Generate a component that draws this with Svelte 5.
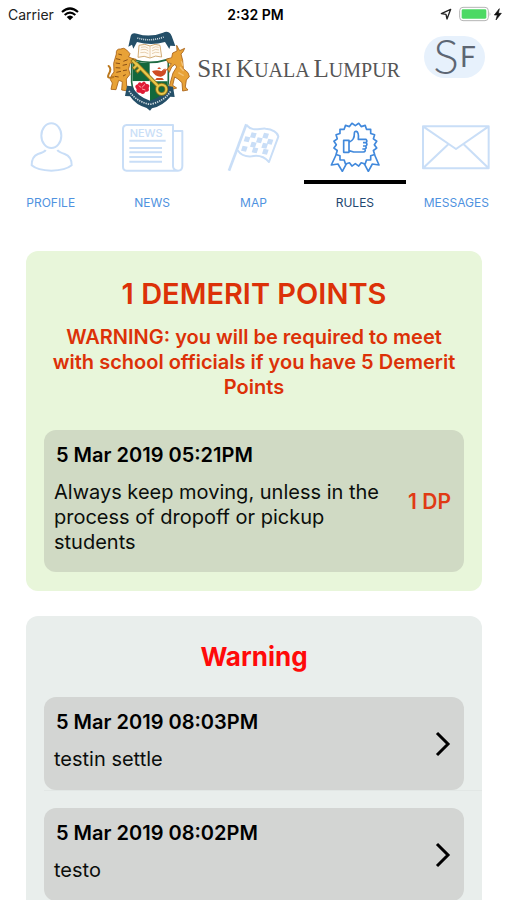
<script>
  const seal = Array.from({ length: 40 }, (_, i) => {
    const a = (i * Math.PI) / 20 - Math.PI / 2 + Math.PI / 20;
    const r = i % 2 ? 57 : 65;
    return `${(436 + r * Math.cos(a)).toFixed(1)},${(89 + r * Math.sin(a)).toFixed(1)}`;
  }).join(' ');

  const checks = [
    [131, 61], [168, 62], [112, 73], [149, 76], [181, 80],
    [131, 89], [165, 92], [104, 101], [136, 106], [167, 110]
  ];

  const tabs = [
    { id: 'profile', label: 'PROFILE', x: 47 },
    { id: 'news', label: 'NEWS', x: 351 },
    { id: 'map', label: 'MAP', x: 25 },
    { id: 'rules', label: 'RULES', x: 330 },
    { id: 'messages', label: 'MESSAGES', x: 634 }
  ];

  const warnings = [
    { date: '5 Mar 2019 08:03PM', text: 'testin settle' },
    { date: '5 Mar 2019 08:02PM', text: 'testo' }
  ];

  let active = $state('rules');
</script>

<div class="app">
  <div class="status">
    <div class="carrier">
      <span>Carrier</span>
      <svg width="18" height="14" viewBox="0 0 54 42" aria-hidden="true">
        <g fill="none" stroke="#000" stroke-width="6.5">
          <path d="M3 15Q27 -6 51 15" />
          <path d="M11 24Q27 10 43 24" />
        </g>
        <path d="M27 40L17 30Q27 21 37 30Z" />
      </svg>
    </div>
    <time>2:32 PM</time>
    <div class="power">
      <svg width="12" height="12" viewBox="0 0 36 36" aria-hidden="true">
        <path d="M4 17L32 4L21 33L18 19Z" fill="none" stroke="#222" stroke-width="4" stroke-linejoin="round" />
      </svg>
      <svg width="44" height="16" viewBox="0 0 132 48" aria-hidden="true">
        <rect x="2" y="4" width="86" height="40" rx="10" fill="#fff" stroke="#b5b5b5" stroke-width="3" />
        <rect x="8" y="10" width="74" height="28" rx="4" fill="#4cd964" />
        <path d="M92 18Q97 24 92 31Z" fill="#aaa" />
        <path d="M121 8L106 27H115L111 42L127 22H118Z" fill="#111" stroke="#111" stroke-width="2" />
      </svg>
    </div>
  </div>

  <header>
    <div class="brand">
      <svg class="crest" width="84" height="84" viewBox="22 10 252 252" aria-hidden="true">
        <path d="M96 98Q150 116 206 98V166Q202 220 151 240Q100 218 96 166Z" fill="#fff" stroke="#1f6b43" stroke-width="5" />
        <path d="M99 102Q125 109 150 109V164H99Z" fill="#12683c" />
        <path d="M151 164H204Q202 215 151 236Z" fill="#12683c" />
        <path d="M92 33Q94 16 112 21Q150 34 190 18Q208 10 216 28L227 58L212 57L209 67L196 46Q155 58 112 46L101 66L97 54L86 60Z" fill="#244f68" />
        <path d="M113 34Q152 46 192 31" fill="none" stroke="#d3dde1" stroke-width="5" stroke-dasharray="3 3" />
        <path d="M118 56Q137 49 151 58Q166 49 181 56L186 91Q167 84 151 94Q134 85 115 92Z" fill="#fffaf1" stroke="#c99c5d" stroke-width="2.5" />
        <path d="M151 58V93M124 62Q138 57 146 65M123 70Q138 65 146 73M122 78Q137 74 146 81M157 65Q167 57 177 62M157 73Q167 65 178 70M157 81Q167 74 179 78" fill="none" stroke="#ddb98d" stroke-width="2" />
        <g fill="#e8a237" stroke="#a76016" stroke-width="2.5" stroke-linejoin="round">
          <path d="M50 82Q48 66 63 67Q73 61 81 70L91 81L87 91L97 95L109 98L107 108L91 109L87 127L91 143L80 157L81 179L91 186L85 193L66 190L68 165L57 161L49 189L34 188L38 169L32 159Q35 142 43 136L42 110Z" />
          <path d="M216 93L219 79L232 73L231 56Q238 69 240 72L255 65Q251 77 244 82L249 101L251 126L265 138L269 150L260 160L257 181L265 190L249 193L247 168L235 157L225 151L219 176L231 184L211 190L210 175L220 139L231 121L226 113L216 121L209 137L203 127L215 111L205 108L199 98Z" />
        </g>
        <path d="M41 151Q20 158 27 143Q37 127 27 118" fill="none" stroke="#bc791f" stroke-width="6" stroke-linecap="round" />
        <path d="M56 82L67 85M49 96L62 99M48 109L61 111M48 123L62 124M50 137L64 134M45 149L57 151M71 104L84 99M69 116L82 113M70 132L82 130M70 148L78 144" stroke="#8a4f16" stroke-width="3" />
        <path d="M245 104L250 118M241 121L252 133M236 138L252 147" stroke="#f3c274" stroke-width="4" />
        <path d="M82 177L97 179Q114 211 151 222Q190 211 205 178L220 180L225 211L212 210Q190 237 157 245L151 252L141 244Q108 235 91 209L76 208Z" fill="#244f68" />
        <path d="M88 193Q111 226 151 233Q192 225 213 194" fill="none" stroke="#d3dde1" stroke-width="5" stroke-dasharray="4 3" />
        <path d="M157 133Q166 151 184 150Q199 147 200 130Q190 129 185 134Q174 128 157 133ZM173 127Q178 117 184 127ZM171 154H188L193 160H166Z" fill="#cf4c24" />
        <path d="M185 137Q193 123 202 130" fill="none" stroke="#cf4c24" stroke-width="3" />
        <path d="M99 164H149V217Q104 205 99 164Z" fill="#fff" />
        <path d="M126 170Q134 159 139 171Q154 172 147 184Q151 197 137 195Q132 207 122 198Q107 200 111 188Q101 177 114 173Q118 163 126 170Z" fill="#df1c36" />
        <path d="M126 183L136 173M124 182L117 177M127 187L137 190" stroke="#ffa3a6" stroke-width="3" />
        <g fill="none" stroke="#8f741d">
          <path d="M109 110L174 177" stroke-width="12" />
          <circle cx="186" cy="188" r="14" stroke-width="11" />
          <path d="M113 114L100 127M123 124L110 137M96 99L112 115" stroke-width="11" />
        </g>
        <g fill="none" stroke="#e8c84b">
          <path d="M108 109L175 178" stroke-width="7" />
          <circle cx="186" cy="188" r="14" stroke-width="6" />
          <path d="M113 114L102 125M123 124L112 135M98 101L112 115" stroke-width="6" />
        </g>
      </svg>
      <h1><span>S</span>RI <span>K</span>UALA <span>L</span>UMPUR</h1>
    </div>
    <button class="avatar" aria-label="SF account"><span class="big">S</span><span>F</span></button>
  </header>

  <nav>
    {#each tabs as tab}
      <a
        href="#{tab.id}"
        class:active={active === tab.id}
        aria-current={active === tab.id ? 'page' : undefined}
        onclick={() => (active = tab.id)}
      >
        <svg width="70" height="50" viewBox="{tab.x} 21 210 150" aria-hidden="true">
          {#if tab.id === 'profile'}
            <ellipse cx="153" cy="62" rx="30" ry="37" />
            <path d="M136 105Q133 111 113 117Q94 124 94 151Q111 166 153 167Q196 166 214 151Q214 124 193 117Q175 111 171 105" />
          {:else if tab.id === 'news'}
            <path d="M519 153V30H380Q369 31 369 42V155Q369 166 380 167H534Q519 165 519 153ZM519 48H547V153Q547 167 534 167" />
            <path d="M388 77H497M388 99H486M388 112H486M388 126H486M388 140H486" />
            <text x="389" y="67">NEWS</text>
          {:else if tab.id === 'map'}
            <path class="pole" d="M58 167L110 28" />
            <path d="M110 30C130 52 149 39 168 41C188 42 205 54 206 65L178 141C163 124 145 120 126 124C105 126 90 116 84 106" />
            {#each checks as [x, y]}
              <path class="check" d="M{x - 5} {y - 9}L{x + 10} {y - 6}L{x + 5} {y + 9}L{x - 10} {y + 6}Z" />
            {/each}
          {:else if tab.id === 'rules'}
            <path d="M378 120L364 150L384 147L397 169L411 143M494 120L507 150L487 147L475 169L461 143" />
            <polygon points={seal} />
            <path d="M401 76H417V112H401ZM417 82Q434 75 433 56Q433 48 439 49Q447 51 445 73H468Q473 78 468 83H459M468 83Q474 89 467 93H459M467 93Q471 99 465 102H457M465 102Q468 110 460 111H431L417 107" />
          {:else}
            <path d="M640 34H837V160H640ZM640 34L739 102L837 34M640 160L716 88M837 160L762 88" />
          {/if}
        </svg>
        <span class="bar"></span>
        <span class="label">{tab.label}</span>
      </a>
    {/each}
  </nav>

  <main>
    <section class="demerits">
      <h2>1 DEMERIT POINTS</h2>
      <p class="notice">WARNING: you will be required to meet with school officials if you have 5 Demerit Points</p>
      <article class="card">
        <div class="copy">
          <h3>5 Mar 2019 05:21PM</h3>
          <p>Always keep moving, unless in the process of dropoff or pickup students</p>
        </div>
        <strong>1 DP</strong>
      </article>
    </section>

    <section class="warnings">
      <h2>Warning</h2>
      <ul>
        {#each warnings as item}
          <li>
            <button class="card">
              <span class="copy">
                <span class="date">{item.date}</span>
                <span class="text">{item.text}</span>
              </span>
              <svg width="16" height="26" viewBox="0 0 16 26" aria-hidden="true">
                <path d="M2 2L13 13L2 24" fill="none" stroke="#000" stroke-width="3" />
              </svg>
            </button>
          </li>
        {/each}
      </ul>
    </section>
  </main>
</div>

<style>
  :global(body) {
    margin: 0;
    background: #fff;
  }
  .app {
    display: flex;
    flex-direction: column;
    height: 100vh;
    font-family: Inter, 'Liberation Sans', sans-serif;
    color: #0b0e0b;
  }
  h1, h2, h3, p, ul {
    margin: 0;
    padding: 0;
  }
  .status {
    display: grid;
    grid-template-columns: 1fr auto 1fr;
    align-items: center;
    height: 28px;
    padding: 0 4px 0 8px;
    font-size: 14px;
    color: #222;
  }
  .carrier, .power {
    display: flex;
    align-items: center;
    gap: 7px;
  }
  .power {
    justify-content: flex-end;
  }
  time {
    font-weight: 600;
    color: #000;
  }
  header {
    display: flex;
    justify-content: flex-end;
    gap: 24px;
    padding: 2px 22px 0 0;
    height: 84px;
  }
  .brand {
    display: flex;
    align-items: center;
    gap: 6px;
  }
  h1 {
    padding-bottom: 6px;
    font: 400 20px/24px 'Liberation Serif', serif;
    color: #555;
    white-space: nowrap;
  }
  h1 span {
    font-size: 25px;
  }
  .avatar {
    display: flex;
    align-items: center;
    justify-content: center;
    gap: 1px;
    box-sizing: border-box;
    width: 61px;
    height: 42px;
    margin-top: 6px;
    padding: 0 0 3px;
    border: 0;
    border-radius: 21px;
    background: #e7f1fc;
    color: #5d6673;
    font: 400 28px/40px Lato, sans-serif;
  }
  .big {
    font-size: 48px;
    font-weight: 300;
  }
  nav {
    display: grid;
    grid-template-columns: repeat(5, 1fr);
    padding-top: 8px;
  }
  nav a {
    display: flex;
    flex-direction: column;
    align-items: center;
    color: #4f92e0;
    text-decoration: none;
  }
  nav svg {
    fill: none;
    stroke: #c9def7;
    stroke-width: 6;
    stroke-linejoin: round;
  }
  nav .active svg {
    stroke: #4189dc;
    stroke-width: 5;
  }
  nav text {
    font: 500 33px Inter, sans-serif;
    fill: #c9def7;
    stroke: none;
  }
  nav polygon {
    fill: #fff;
  }
  .pole {
    stroke-width: 8;
  }
  .check {
    fill: #c9def7;
    stroke: none;
  }
  .bar {
    align-self: stretch;
    height: 4px;
    margin-top: 8px;
  }
  .active .bar {
    background: #000;
  }
  .label {
    margin-top: 11px;
    font-size: 12px;
    line-height: 16px;
  }
  .active .label {
    color: #22466f;
  }
  main {
    display: flex;
    flex: 1;
    flex-direction: column;
    gap: 25px;
    min-height: 0;
    overflow-y: auto;
    scrollbar-width: none;
    margin-top: 40px;
    padding: 0 25px 0 26px;
  }
  section {
    flex-shrink: 0;
    border-radius: 12px;
    text-align: center;
  }
  .demerits {
    padding: 24px 18px 19px;
    background: #e8f6da;
    color: #dc3108;
  }
  .demerits h2 {
    font-size: 29px;
    line-height: 38px;
    font-weight: 600;
  }
  .notice {
    margin-top: 12px;
    padding: 0 6px;
    font-size: 20px;
    line-height: 25px;
    font-weight: 600;
  }
  .card {
    display: flex;
    align-items: center;
    justify-content: space-between;
    width: 100%;
    box-sizing: border-box;
    padding: 0 13px 0 10px;
    border: 0;
    border-radius: 12px;
    text-align: left;
    font: 400 20px/25px Inter, 'Liberation Sans', sans-serif;
    color: #0b0e0b;
  }
  .demerits .card {
    margin-top: 30px;
    background: #d0dac4;
  }
  .copy {
    display: flex;
    flex-direction: column;
    gap: 12px;
    flex: 1;
    padding: 13px 0 18px;
  }
  .demerits .copy {
    max-width: 330px;
    padding-bottom: 17px;
  }
  h3, .date {
    padding-left: 2px;
    font-size: 20px;
    line-height: 25px;
    font-weight: 600;
    color: #000;
  }
  strong {
    font-weight: 600;
    font-size: 21px;
    color: #e03a14;
  }
  .warnings {
    background: #e9eeec;
    padding: 24px 0 18px 18px;
  }
  .warnings h2 {
    padding-right: 18px;
    font-size: 26px;
    line-height: 34px;
    font-weight: 700;
    color: #ff0a0a;
  }
  ul {
    display: flex;
    flex-direction: column;
    margin-top: 23px;
    gap: 17px;
    list-style: none;
  }
  li {
    padding-right: 18px;
    border-bottom: 1px solid #e2e7e5;
  }
  li:last-child {
    border-bottom: 0;
  }
  li .card {
    background: #d3d5d3;
  }
</style>
